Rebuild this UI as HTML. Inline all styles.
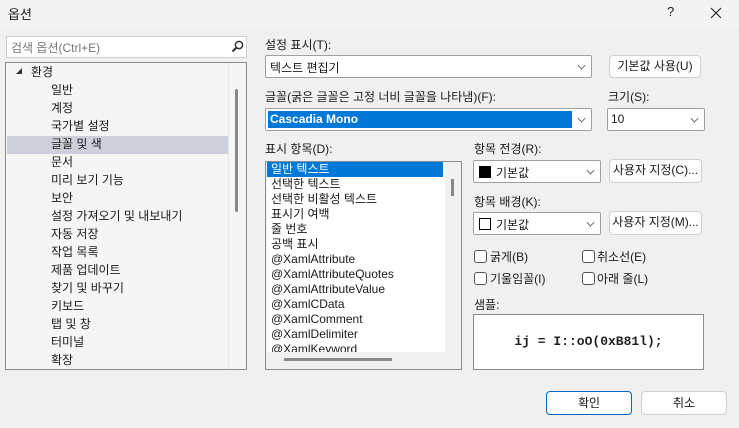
<!DOCTYPE html>
<html><head><meta charset="utf-8"><style>
*{box-sizing:border-box;margin:0;padding:0}
body{width:739px;height:428px;background:#f0f0f0;font-family:"Liberation Sans","Noto Sans CJK KR",sans-serif;font-size:12px;color:#1a1a1a;position:relative;overflow:hidden}
.a{position:absolute;white-space:nowrap}
.box{position:absolute;background:#fff;border:1px solid #b5b5b5}
.combo{position:absolute;background:#fff;border:1px solid #a0a0a0;border-radius:2px}
.chev{position:absolute;right:6px;top:6px;width:7px;height:7px;border-right:1px solid #555;border-bottom:1px solid #555;transform:rotate(45deg) scale(.8)}
.btn{position:absolute;background:#fdfdfd;border:1px solid #cfcfcf;border-radius:4px;text-align:center;line-height:20px}
.cb{position:absolute;width:13px;height:13px;border:1px solid #555;border-radius:3px;background:#fff}
.ti{position:absolute;left:51px;line-height:18px}
.li{position:absolute;left:4px;line-height:15px}
</style></head><body>
<div class="a" style="left:0;top:0;width:739px;height:28px;background:#f3f3f3"></div>
<div class="a" style="left:8px;top:4px;font-size:13px">옵션</div>
<div class="a" style="left:667px;top:4px;font-size:13px">?</div>
<svg class="a" style="left:710px;top:7px" width="12" height="12"><path d="M1 1L11 11M11 1L1 11" stroke="#222" stroke-width="1.1"/></svg>

<div class="box" style="left:6px;top:36px;width:241px;height:22px;border-color:#cfcfcf"></div>
<div class="a" style="left:11px;top:39px;color:#777">검색 옵션(Ctrl+E)</div>
<svg class="a" style="left:231px;top:40px" width="13" height="13"><circle cx="8" cy="5" r="3.6" fill="none" stroke="#333" stroke-width="1.5"/><path d="M5.5 7.5L1.5 11.5" stroke="#333" stroke-width="2"/></svg>

<div class="a" style="left:5px;top:62px;width:242px;height:308px;background:#f5f5f5;border:1px solid #8c8c8c"></div>
<div class="a" style="left:228px;top:63px;width:1px;height:306px;background:#e8e8e8"></div>
<div class="a" style="left:235px;top:89px;width:3px;height:123px;background:#888;border-radius:2px"></div>
<div class="a" style="left:7px;top:136px;width:221px;height:18px;background:#cdcfda"></div>
<div class="a" style="left:16px;top:68px;width:0;height:0;border-left:6px solid transparent;border-bottom:6px solid #333"></div>
<div class="ti" style="left:31px;top:63px">환경</div>
<div class="ti" style="top:81px">일반</div>
<div class="ti" style="top:99px">계정</div>
<div class="ti" style="top:117px">국가별 설정</div>
<div class="ti" style="top:135px">글꼴 및 색</div>
<div class="ti" style="top:153px">문서</div>
<div class="ti" style="top:171px">미리 보기 기능</div>
<div class="ti" style="top:189px">보안</div>
<div class="ti" style="top:207px">설정 가져오기 및 내보내기</div>
<div class="ti" style="top:225px">자동 저장</div>
<div class="ti" style="top:243px">작업 목록</div>
<div class="ti" style="top:261px">제품 업데이트</div>
<div class="ti" style="top:279px">찾기 및 바꾸기</div>
<div class="ti" style="top:297px">키보드</div>
<div class="ti" style="top:315px">탭 및 창</div>
<div class="ti" style="top:333px">터미널</div>
<div class="ti" style="top:351px">확장</div>

<div class="a" style="left:265px;top:36px">설정 표시(T):</div>
<div class="combo" style="left:265px;top:55px;width:327px;height:23px"><div class="a" style="left:4px;top:3px">텍스트 편집기</div><div class="chev"></div></div>
<div class="btn" style="left:609px;top:55px;width:92px;height:23px">기본값 사용(U)</div>

<div class="a" style="left:265px;top:88px">글꼴(굵은 글꼴은 고정 너비 글꼴을 나타냄)(F):</div>
<div class="combo" style="left:265px;top:108px;width:327px;height:23px"><div class="a" style="left:2px;top:2px;width:304px;height:17px;background:#0078d7;color:#fff;font-weight:bold;padding-left:2px;line-height:17px">Cascadia Mono</div><div class="chev"></div></div>
<div class="a" style="left:608px;top:88px">크기(S):</div>
<div class="combo" style="left:607px;top:108px;width:98px;height:23px"><div class="a" style="left:3px;top:3px">10</div><div class="chev"></div></div>

<div class="a" style="left:265px;top:140px">표시 항목(D):</div>
<div class="a" style="left:265px;top:161px;width:197px;height:209px;background:#f0f0f0;border:1px solid #8c8c8c"></div>
<div class="a" style="left:267px;top:162px;width:178px;height:190px;background:#fff;overflow:hidden">
<div class="a" style="left:0;top:0;width:176px;height:15px;background:#0078d7"></div>
<div class="li" style="top:0;color:#fff">일반 텍스트</div>
<div class="li" style="top:15px">선택한 텍스트</div>
<div class="li" style="top:30px">선택한 비활성 텍스트</div>
<div class="li" style="top:45px">표시기 여백</div>
<div class="li" style="top:60px">줄 번호</div>
<div class="li" style="top:75px">공백 표시</div>
<div class="li" style="top:90px">@XamlAttribute</div>
<div class="li" style="top:105px">@XamlAttributeQuotes</div>
<div class="li" style="top:120px">@XamlAttributeValue</div>
<div class="li" style="top:135px">@XamlCData</div>
<div class="li" style="top:150px">@XamlComment</div>
<div class="li" style="top:165px">@XamlDelimiter</div>
<div class="li" style="top:180px">@XamlKeyword</div>
</div>
<div class="a" style="left:451px;top:179px;width:3px;height:17px;background:#888"></div>
<div class="a" style="left:284px;top:358px;width:108px;height:3px;background:#888"></div>

<div class="a" style="left:474px;top:140px">항목 전경(R):</div>
<div class="combo" style="left:473px;top:160px;width:128px;height:23px"><div class="a" style="left:5px;top:5px;width:12px;height:12px;background:#000"></div><div class="a" style="left:22px;top:3px">기본값</div><div class="chev"></div></div>
<div class="btn" style="left:609px;top:159px;width:93px;height:24px;font-size:12px">사용자 지정(C)...</div>
<div class="a" style="left:474px;top:193px">항목 배경(K):</div>
<div class="combo" style="left:473px;top:212px;width:128px;height:23px"><div class="a" style="left:5px;top:5px;width:12px;height:12px;border:1px solid #000;background:#fff"></div><div class="a" style="left:22px;top:3px">기본값</div><div class="chev"></div></div>
<div class="btn" style="left:609px;top:211px;width:93px;height:24px">사용자 지정(M)...</div>

<div class="cb" style="left:474px;top:250px"></div><div class="a" style="left:490px;top:248px">굵게(B)</div>
<div class="cb" style="left:582px;top:250px"></div><div class="a" style="left:597px;top:248px">취소선(E)</div>
<div class="cb" style="left:474px;top:272px"></div><div class="a" style="left:490px;top:270px">기울임꼴(I)</div>
<div class="cb" style="left:582px;top:272px"></div><div class="a" style="left:597px;top:270px">아래 줄(L)</div>

<div class="a" style="left:474px;top:296px">샘플:</div>
<div class="a" style="left:473px;top:314px;width:231px;height:56px;background:#fff;border:1px solid #8c8c8c"></div>
<div class="a" style="left:473px;top:334px;width:231px;text-align:center;font-family:'Liberation Mono','DejaVu Sans Mono',monospace;font-size:13px;font-weight:bold;color:#222">ij = I::oO(0xB81l);</div>

<div class="btn" style="left:546px;top:391px;width:86px;height:24px;border:1px solid #0067c0;line-height:22px">확인</div>
<div class="btn" style="left:641px;top:391px;width:86px;height:24px;line-height:22px">취소</div>
</body></html>
